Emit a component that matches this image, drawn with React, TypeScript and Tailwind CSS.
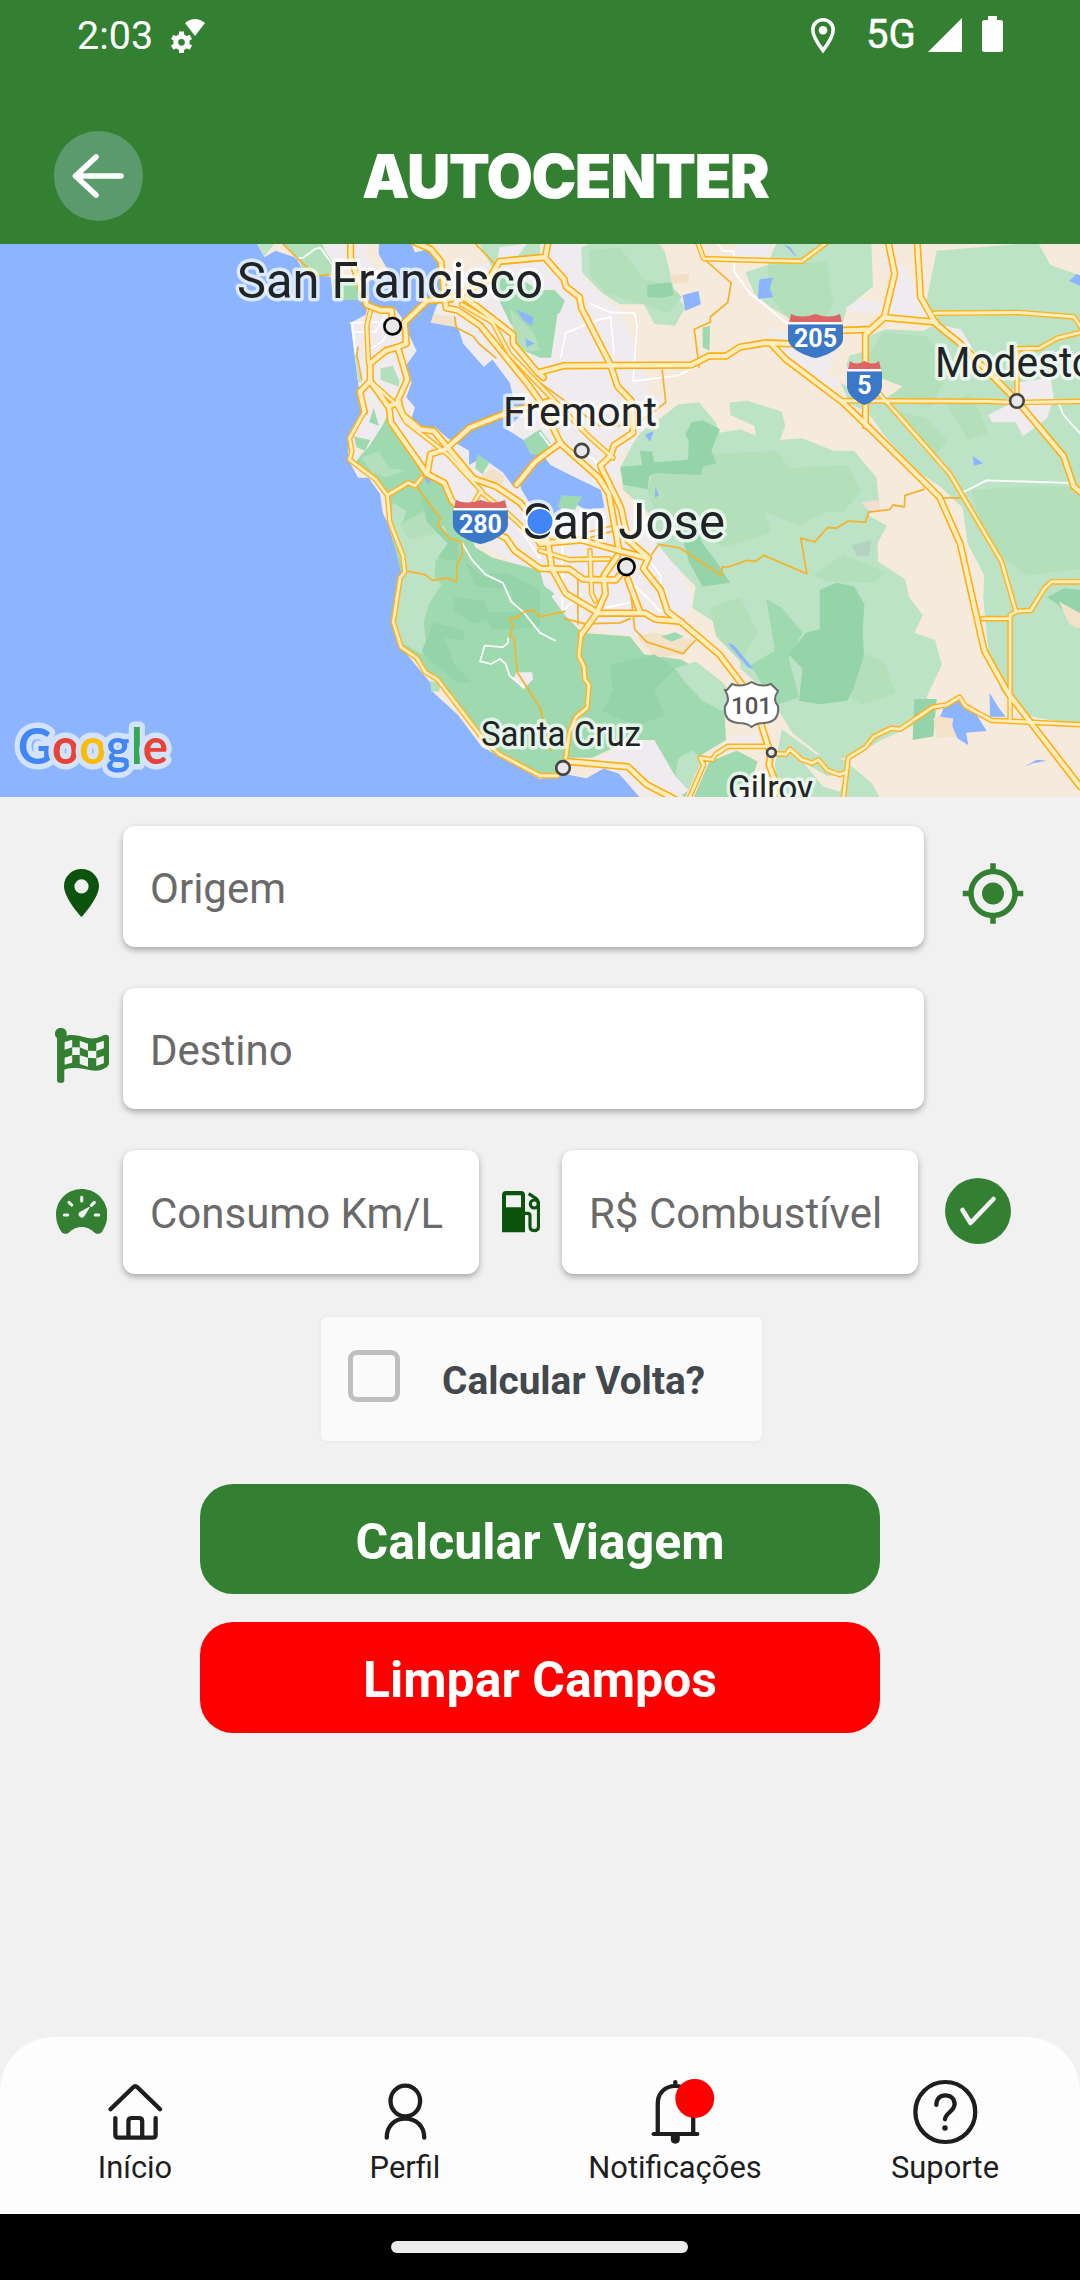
import React from "react";
import { MdMyLocation } from "react-icons/md";

const ROBOTO = "Roboto, 'Noto Sans', sans-serif";

const MAJOR = [
  "1018,0 1018,50 1065,182 1105,197 1137,197 1140,240",
  "1170,235 1240,170 1310,165",
  "1190,0 1250,25 1280,60 1295,190 1330,197 1395,240 1530,400 1568,450 1628,570 1738,665 1768,710 1798,870",
  "1330,150 1390,190 1490,265 1490,290 1560,370 1578,385",
  "1300,165 1360,140 1420,110 1450,60 1583,48",
  "1175,230 1180,290 1155,300 1183,390 1155,450 1170,490 1220,530 1260,535 1375,668 1440,690 1510,735 1588,830 1603,920 1643,990 1738,1045 1873,1045 1903,1062 1978,1068",
  "1155,300 1120,310 1075,345 1075,395 1045,425 1058,480",
  "1075,395 1130,470 1135,510 1240,655 1290,680 1312,730 1380,790 1470,835 1495,870 1568,920 1653,922 1693,950 1788,952 1819,915",
  "1130,465 1160,455",
  "1240,655 1250,600 1295,585 1365,525 1470,485 1600,450",
  "1500,685 1555,620 1628,568",
  "1593,0 1583,50 1638,110 1643,130 1683,160 1688,190 1773,350 1793,410 1833,450 1838,540 1783,575 1773,605 1743,632 1768,680 1803,750 1823,840 1883,890 1868,920 1918,980 1938,1040 1978,1070 2088,1160 2163,1255 2208,1350 2238,1440 2233,1470 2253,1520 2248,1570",
  "1568,370 1638,352 2008,350 2058,325 2108,325 2148,300 2223,288 2330,292",
  "2238,290 2283,335 2448,455 2518,520 2728,720 2788,850 2858,1150 2928,1270 3008,1370 3136,1530",
  "2400,255 2528,250 2568,215 2598,95 2578,0",
  "2513,520 2513,265 2568,217 2718,230",
  "2663,0 2673,160 2718,235 2788,290 2953,450 3088,605 3118,690 3140,708",
  "1648,1460 1823,1475 1878,1525 1968,1570",
  "1733,1045 1758,990 1753,940 1793,885",
  "1823,950 1858,1040",
  "1733,1045 1688,1105",
  "1568,850 1688,840 1798,870 1878,890",
];

const MID = [
  "1058,480 1015,555 1022,590 1015,615 1090,670 1125,715 1132,790 1170,885 1175,930 1162,945 1142,1070 1165,1140 1210,1170 1235,1210 1270,1230 1405,1400 1450,1440 1568,1500 1620,1500",
  "1125,715 1185,680 1205,688 1225,665",
  "1075,200 1065,240 1070,345",
  "1370,745 1395,705 1480,770 1568,850",
  "1080,400 1150,460 1180,510 1300,600 1400,705",
  "1340,180 1430,230 1480,320 1560,400 1710,550 1780,610",
  "2713,205 2958,203 3118,215 3140,245",
  "2440,450 2868,452 2948,455 3140,452",
  "2553,430 2758,655 2908,900 2950,1040",
  "3140,957 3053,957 3033,975 2993,1037 2953,1040 2933,1050 2933,1345",
  "2853,1060 2933,1060",
  "2448,1570 2463,1450 2513,1420 2538,1390 2588,1367 2613,1370 2708,1308 2748,1302 2786,1280 2803,1305 2878,1345 3140,1357",
  "2248,1438 2283,1440 2293,1425 2328,1455 2358,1465 2376,1455 2403,1485 2438,1497 2458,1490",
  "1998,1570 2043,1470 2033,1450 2068,1455 2078,1440 2113,1418 2228,1418",
  "1688,1100 1681,1165 1696,1195 1698,1230 1710,1245 1705,1310 1673,1335 1653,1380 1643,1450",
  "2023,0 2043,52 2133,55 2328,60 2410,0",
  "1713,870 1718,990 1728,1010",
  "1568,870 1653,895 1768,893",
  "2953,450 2953,305 3018,303 3070,275 3140,258",
];

const THIN = [
  "2718,722 2788,722",
  "2683,698 2628,715 2626,747 2593,742 2583,755 2523,762 2513,790 2463,787 2428,807 2403,805 2366,845 2325,835 2343,935 2218,883 2193,900 2168,897 2118,915 2098,915 2095,940 1973,862 1913,852 1893,880",
  "2043,52 2123,120 2113,175 2063,215 2063,230 2016,250 2030,355",
  "1923,365 1933,455 1843,520 1740,520 1568,400",
  "1833,1000 1843,1090 1878,1125 1983,1158 2018,1122",
  "1678,940 1678,1075",
  "1210,690 1280,780 1270,795 1305,835 1340,845 1343,880 1328,905 1325,957 1300,947 1255,953 1235,937 1185,928",
  "1640,1040 1568,1055 1545,1035 1520,1042 1495,1060 1480,1058 1490,1080 1480,1110 1493,1115 1502,1210 1568,1310 1600,1430",
  "1320,215 1325,245 1375,270 1390,290 1440,330",
  "1040,300 1036,320 1050,390",
  "810,0 900,85 925,100 955,98",
  "1370,0 1450,80",
  "1640,1060 1700,1075 1800,1072 1830,1060",
  "1700,820 1780,800",
  "1650,850 1780,815",
];

const WHITE = [
  "1018,232 1100,230",
  "1025,257 1090,257 1118,210",
  "1022,232 1033,318",
  "1075,305 1110,285 1130,250",
  "1340,845 1370,895 1410,937 1460,960 1485,1013 1520,1042 1568,1100 1613,1122",
  "1475,1115 1475,1128 1460,1140 1407,1136 1394,1180 1425,1187 1452,1173 1468,1187 1480,1220 1520,1252",
  "860,50 880,50 915,25 930,22 970,75",
  "2078,0 2098,30 2130,32 2133,90 2178,150 2288,235",
  "1713,178 1773,203 1843,205 1850,240 1838,395 1968,380 2020,355",
  "1628,330 1643,260 1733,225 1773,215 1783,320",
  "2793,708 2865,673 3100,680",
  "3073,455 3088,490 3140,545",
  "1633,860 1633,1040 1688,990",
  "1888,900 1918,940 1918,970",
  "1823,950 1888,1010 1918,1040",
  "1758,1030 1833,1015",
  "1380,790 1480,770 1510,810 1568,890",
  "1568,540 1600,580",
  "1690,590 1730,620 1735,650",
];

const LIGHT = "#bce3c6";
const GREEN = "#9fd9b0";
const SOFT = "#b4dfbb";
const DARK = "#95d4a8";
const URBAN = "#efebee";
const SAND = "#f6eadd";
const WATER = "#8cb4ff";

const AREAS: [string, string][] = [
  ["740,0 768,48 800,30 860,50 885,95 960,103 968,168 1045,168 1065,190 1060,225 1018,232 1040,400 1055,475 1015,540 1010,612 1040,665 1070,665 1103,710 1112,765 1125,790 1150,870 1165,930 1150,1000 1137,1075 1165,1140 1215,1200 1250,1240 1255,1264 1330,1330 1400,1420 1450,1445 1568,1510 1640,1495 1703,1508 1753,1480 1798,1495 1865,1570 3136,1570 3136,0", SAND],
  ["1018,232 1080,200 1568,0 1700,0 1690,100 1800,200 1870,340 1880,430 1940,450 1860,560 1800,600 1790,700 1860,800 1960,900 2010,1000 2000,1040 1850,1110 1620,1060 1568,980 1568,925 1480,900 1400,850 1240,660 1150,520 1080,580 1030,560 1055,475 1040,400", URBAN],
  ["1010,612 1040,590 1060,640 1090,665 1110,680 1120,770 1103,710 1070,665 1040,665", URBAN],
  ["1870,700 1900,840 1890,760", SAND],
  ["1810,190 1880,175 1960,230 2040,260 2020,350 1845,350 1850,205", SAND],
  ["740,0 768,45 805,0", LIGHT],
  ["815,0 865,50 885,95 960,100 965,60 940,25 950,0", SOFT],
  ["930,0 950,40 1000,75 1055,168 1045,168 1100,90 1060,40 1065,0", URBAN],
  ["965,110 1045,110 1045,168 968,168", GREEN],
  ["1105,360 1140,352 1160,395 1158,410 1105,392", SOFT],
  ["1085,470 1100,520 1072,510", GREEN],
  ["1040,300 1036,340 1050,400 1040,400 1030,320", LIGHT],
  ["1125,490 1190,580 1240,655 1290,680 1330,745 1380,860 1430,890 1568,925 1580,970 1640,1050 1690,1100 1830,1110 1870,1160 1980,1175 2100,1250 2108,1400 2040,1440 1990,1560 1920,1530 1895,1420 1830,1400 1720,1450 1650,1450 1620,1500 1568,1500 1450,1440 1400,1400 1270,1240 1165,1140 1140,1070 1165,930 1130,800 1120,720 1090,670 1030,625 1050,600 1070,580 1110,520", GREEN],
  ["1028,550 1075,560 1060,590 1035,580", GREEN],
  ["1050,610 1100,590 1130,640 1180,645 1120,665 1080,650", SOFT],
  ["1140,735 1180,760 1165,800 1230,810 1290,800 1308,840 1305,885 1265,895 1262,945 1282,965 1245,1020 1230,1070 1238,1130 1225,1160 1152,1120 1145,1070 1172,930 1135,800", LIGHT],
  ["1170,790 1230,760 1290,820 1220,830 1190,840 1165,808", SOFT],
  ["1215,690 1280,780 1270,800 1330,850 1330,900 1270,890 1300,850 1240,790", DARK],
  ["1320,1000 1410,1010 1418,1060 1380,1075 1315,1040", DARK],
  ["1260,1070 1350,1095 1345,1120 1290,1115 1320,1190 1370,1240 1330,1240 1250,1180 1225,1150", DARK],
  ["1350,900 1400,940 1470,930 1568,980 1568,1080 1500,1090 1430,1090 1400,1040 1500,1040 1480,980 1380,970", DARK],
  ["1500,1210 1545,1210 1548,1230 1520,1258 1490,1230", URBAN],
  ["1250,1235 1280,1240 1275,1264 1252,1264", SOFT],
  ["1385,0 1568,0 1568,60 1460,70 1440,100 1420,60", LIGHT],
  ["1450,20 1530,10 1500,50 1440,90", URBAN],
  ["1460,80 1583,150 1620,200 1600,330 1568,330 1500,300 1520,280 1480,230 1440,150 1420,110", GREEN],
  ["1480,190 1550,260 1568,310 1500,310", SOFT],
  ["1250,205 1310,215 1330,245 1300,245 1252,232", "#f3e2c9"],
  ["1688,20 1740,0 1905,0 1930,30 1960,150 1990,190 1960,240 1900,235 1870,180 1800,180 1750,150 1690,90", LIGHT],
  ["1710,30 1800,20 1830,60 1870,110 1950,130 1980,160 1940,205 1870,180 1760,150 1715,100", SOFT],
  ["1880,125 1950,118 1955,155 1925,162 1880,160", DARK],
  ["1568,140 1610,140 1640,170 1625,205 1568,210", GREEN],
  ["2040,245 2062,240 2060,310 2040,300", GREEN],
  ["1945,98 2000,95 2000,118 1950,122", "#f1dfc6"],
  ["2133,0 2240,0 2230,50 2133,55", URBAN],
  ["2165,90 2230,70 2245,30 2260,0 2530,0 2535,130 2460,190 2440,250 2320,235 2240,190 2190,150", LIGHT],
  ["2230,70 2400,60 2420,180 2400,215 2290,220 2230,150", SOFT],
  ["2560,50 2630,80 2680,170 2710,230 2560,215 2590,100", URBAN],
  ["2455,190 2500,165 2560,180 2550,205 2470,200", URBAN],
  ["2720,30 2970,10 3010,0 3050,70 3140,100 3140,1360 2970,1330 2905,1260 2870,1150 2855,1000 2858,940 2810,850 2795,750 2730,690 2668,650 2578,560 2518,480 2470,460 2440,400 2470,370 2440,330 2520,310 2520,270 2570,250 2680,255 2730,230 2690,170", LIGHT],
  ["2560,260 2690,270 2750,330 2740,400 2700,470 2590,440 2520,330", SOFT],
  ["2610,480 2690,500 2750,560 2720,600 2640,520", SOFT],
  ["2750,460 2820,430 2870,540 2810,560", SOFT],
  ["2440,400 2470,350 2540,380 2620,410 2600,425 2560,450 2520,440", SAND],
  ["2220,240 2440,330 2460,340 2420,420 2380,400 2290,330", URBAN],
  ["2440,300 2470,315 2440,400 2400,370", SAND],
  ["2950,400 3050,385 3060,440 3040,500 2970,550 2950,510 2880,510 2870,490 2930,460", URBAN],
  ["2740,240 2790,250 2840,330 2780,290", URBAN],
  ["2820,700 2980,690 3140,690 3140,920 2980,940 2900,880 2850,800", SOFT],
  ["3040,1000 3090,975 3140,980 3140,1100 3110,1060 3070,1020", DARK],
  ["3075,1012 3136,1045 3136,1090 3105,1075", "#f3e2c9"],
  ["1838,570 1860,540 1890,520 1970,460 2030,455 2078,510 2090,540 2150,530 2195,548 2190,520 2120,490 2118,455 2170,450 2270,480 2280,520 2265,560 2330,555 2420,590 2480,590 2545,665 2553,740 2520,770 2575,800 2548,850 2550,900 2628,950 2640,1000 2680,1050 2655,1100 2715,1120 2735,1190 2690,1280 2720,1310 2650,1360 2560,1400 2470,1450 2400,1455 2300,1380 2230,1270 2150,1200 2145,1115 2010,1030 2020,970 1950,900 1900,840 1880,760 1810,700 1800,640", LIGHT],
  ["1900,640 2040,600 2260,590 2290,640 2220,760 2240,820 2100,860 2000,800 1900,760 1880,700", SOFT],
  ["1858,590 1893,592 1900,622 1998,615 2000,560 1990,545 2008,510 2040,505 2090,530 2065,590 2080,625 2040,635 2035,658 1905,653 1885,660 1880,698 1810,685 1802,635 1865,630", DARK],
  ["2270,640 2460,630 2500,700 2450,760 2400,760 2320,800 2220,760", SOFT],
  ["1970,790 2010,770 2040,850 2080,900 2120,960 2040,970 2000,900", DARK],
  ["2360,940 2450,880 2570,930 2540,960 2400,955", SOFT],
  ["2225,1005 2270,1030 2330,1100 2290,1170 2320,1280 2260,1300 2210,1240 2180,1190 2250,1150", GREEN],
  ["2380,980 2430,960 2480,970 2510,1020 2505,1090 2510,1200 2460,1290 2380,1300 2320,1290 2330,1200 2290,1160 2340,1100 2380,1090", DARK],
  ["2060,1030 2150,1000 2200,1100 2150,1180 2080,1110", SOFT],
  ["2510,1160 2570,1180 2600,1270 2500,1300 2470,1280", SOFT],
  ["2472,855 2530,840 2525,885 2490,885", "#b3d2c0"],
  ["2500,735 2550,728 2560,760 2520,755", "#f0dfd2"],
  ["2655,1285 2720,1285 2710,1390 2650,1400", DARK],
  ["2710,1340 2760,1310 2780,1390 2720,1395", "#f3e2c9"],
  ["1850,1110 1900,1100 1960,1110 2010,1120 1990,1160 1900,1170", "#f3e2c9"],
  ["1770,1190 1900,1160 1960,1200 1900,1260 1930,1330 1850,1360 1750,1320 1780,1260", DARK],
  ["1960,1200 2020,1180 2100,1240 2140,1300 2100,1320 2040,1290 1990,1240", LIGHT],
  ["1830,1400 1900,1400 1960,1500 2000,1540 1960,1570 1860,1550 1790,1490 1700,1480", URBAN],
  ["1970,1450 2010,1430 2040,1450 2000,1540 1960,1500", LIGHT],
  ["2060,1460 2140,1430 2200,1460 2180,1520 2120,1570 2010,1570", GREEN],
  ["2140,1390 2190,1385 2220,1420 2180,1430 2120,1415", URBAN],
  ["2270,1370 2370,1440 2450,1455 2530,1520 2560,1570 2260,1570 2250,1470", LIGHT],
  ["2330,1460 2400,1500 2450,1500 2440,1545 2390,1530", SAND],
  ["1568,960 1610,990 1590,1010 1568,1000", GREEN],
  ["1920,1110 1960,1098 1985,1110 1950,1125", GREEN],
  ["1100,0 1190,0 1205,35 1245,25 1280,60 1300,130 1265,190 1250,232 1330,245 1345,290 1405,355 1430,335 1480,400 1490,440 1545,460 1470,530 1520,560 1568,590 1598,630 1650,655 1745,700 1755,750 1700,755 1640,720 1620,780 1540,740 1515,700 1510,685 1490,690 1460,650 1400,610 1362,630 1362,590 1300,555 1265,525 1220,520 1195,500 1205,468 1180,440 1195,400 1180,350 1210,310 1180,250 1165,215 1145,190 1060,190 1060,168 1045,168 1062,120 1130,90 1100,40", WATER],
  ["1345,290 1370,285 1420,330 1405,355", URBAN],
  ["1520,560 1568,530 1600,570 1590,600 1540,600", GREEN],
  ["1385,600 1422,622 1400,655 1380,640", GREEN],
  ["1400,655 1430,640 1465,660 1460,685 1400,670", "#f3e2c9"],
  ["1630,715 1690,718 1670,755 1620,750", GREEN],
  ["1982,155 2028,143 2035,180 1990,198", WATER],
  ["2205,110 2245,105 2235,135 2245,160 2200,165", WATER],
  ["2275,11 2295,20 2315,50", WATER],
  ["1873,545 1898,535 1887,565", WATER],
  ["1903,690 1913,715 1902,722", WATER],
  ["2112,1128 2130,1133 2190,1203 2170,1195", WATER],
  ["2825,605 2855,625 2828,632", WATER],
  ["2873,1268 2900,1310 2920,1335 2875,1335", WATER],
  ["2742,1305 2780,1285 2830,1320 2865,1375 2805,1380 2812,1415 2780,1395 2765,1360 2768,1340 2730,1335", WATER],
  ["2975,1475 3010,1455 3040,1458 3000,1465", WATER],
  ["3105,115 3125,95 3140,100 3140,130", WATER],
  ["1500,195 1548,215 1545,240 1520,225", WATER],
  ["1525,275 1552,290 1530,300", WATER],
  ["1230,665 1252,668 1245,685", WATER],
  ["1638,1497 1703,1508 1753,1480 1798,1495 1865,1570 1568,1570 1568,1510", WATER],
];

function Lines({ list, color, width }: { list: string[]; color: string; width: number }) {
  return (
    <g fill="none" stroke={color} strokeWidth={width} strokeLinejoin="round" strokeLinecap="round">
      {list.map((p) => (
        <polyline key={p} points={p} />
      ))}
    </g>
  );
}

function Place({ x, y, size, len, children }: { x: number; y: number; size: number; len: number; children: string }) {
  return (
    <text
      x={x}
      y={y}
      fontSize={size}
      textLength={len}
      lengthAdjust="spacingAndGlyphs"
      fill="#202427"
      stroke="#ffffff"
      strokeOpacity="0.7"
      strokeWidth="7"
      strokeLinejoin="round"
      paintOrder="stroke"
    >
      {children}
    </text>
  );
}

function Interstate({ cx, top, w, label }: { cx: number; top: number; w: number; label: string }) {
  const h = w / 2;
  return (
    <g transform={`translate(${cx} ${top})`}>
      <path d={`M${-h} 18 H${h} V25 C${h} 33 ${h * 0.5} 41 0 44 C${-h * 0.5} 41 ${-h} 33 ${-h} 25Z`} fill="#3b78c8" />
      <path d={`M${-h + 3} 0 Q${-h / 2} 5 0 0 Q${h / 2} 5 ${h - 3} 0 L${h - 1} 8.5 H${-h + 1}Z`} fill="#dc6565" />
      <rect x={-h + 1} y="8" width={w - 2} height="2.5" fill="#fff" />
      <rect x={-h} y="10.5" width={w} height="8" fill="#3b78c8" />
      <text x="0" y="33" fontSize="25" fontWeight="700" fill="#fff" textAnchor="middle">
        {label}
      </text>
    </g>
  );
}

function CityDot({ x, y, r, dark }: { x: number; y: number; r: number; dark?: boolean }) {
  return <circle cx={x} cy={y} r={r} fill="#e8e8e8" stroke={dark ? "#000" : "#444"} strokeWidth="2.6" />;
}

function MapView() {
  return (
    <svg className="block h-[553px] w-full shrink-0" viewBox="0 244 1080 553" fontFamily={ROBOTO}>
      <rect x="0" y="244" width="1080" height="553" fill={WATER} />
      <g transform="translate(0 240) scale(0.34439 0.35714)">
        {AREAS.map(([pts, fill]) => (
          <polygon key={pts} points={pts} fill={fill} />
        ))}
        <Lines list={WHITE} color="#ffffff" width={5} />
        <Lines list={THIN} color="#f5b32b" width={5} />
        <Lines list={MID} color="#ffb31a" width={16} />
        <Lines list={MAJOR} color="#ffae0d" width={21} />
        <Lines list={MID} color="#ffedbf" width={8} />
        <Lines list={MAJOR} color="#ffedbf" width={12} />
      </g>
      <CityDot x={392.6} y={326.2} r={8.2} dark />
      <CityDot x={626.4} y={566.8} r={8.2} dark />
      <CityDot x={581.7} y={450.7} r={6.8} />
      <CityDot x={1016.9} y={401} r={6.8} />
      <CityDot x={563} y={767.9} r={6.8} />
      <CityDot x={771.4} y={752.5} r={4.4} />
      <Interstate cx={815.5} top={314} w={55} label="205" />
      <Interstate cx={864.5} top={361} w={35} label="5" />
      <Interstate cx={480.4} top={500} w={55} label="280" />
      <path
        d="M727 690 L732 684 Q742 688 751.5 682 Q761 688 771 684 L778 691 Q772 700 778 706 Q780 722 764 723 Q756 723 751.5 727 Q747 723 739 723 Q723 722 725 706 Q731 700 725 690Z"
        fill="#fff"
        stroke="#6b6b6b"
        strokeWidth="2"
      />
      <text x="751.5" y="713.5" fontSize="24" fontWeight="500" fill="#555" textAnchor="middle">
        101
      </text>
      <Place x={237} y={297.8} size={50} len={306}>San Francisco</Place>
      <Place x={503} y={426} size={41.5} len={154}>Fremont</Place>
      <Place x={523} y={539} size={50} len={202}>San Jose</Place>
      <Place x={935} y={376.6} size={42} len={160}>Modesto</Place>
      <Place x={481} y={745.5} size={35.5} len={160}>Santa Cruz</Place>
      <Place x={728} y={799.5} size={35.5} len={85}>Gilroy</Place>
      <circle cx="540" cy="521.4" r="13.3" fill="#4285f4" stroke="#fff" strokeWidth="1.6" />
      <text
        x="18"
        y="763.5"
        fontSize="50"
        fontWeight="700"
        textLength="150"
        lengthAdjust="spacingAndGlyphs"
        fontFamily="Lato, sans-serif"
        stroke="#d3e2fd"
        strokeWidth="11"
        strokeLinejoin="round"
        paintOrder="stroke"
      >
        <tspan fill="#4285f4">G</tspan>
        <tspan fill="#ea4335">o</tspan>
        <tspan fill="#fbbc05">o</tspan>
        <tspan fill="#4285f4">g</tspan>
        <tspan fill="#34a853">l</tspan>
        <tspan fill="#ea4335">e</tspan>
      </text>
    </svg>
  );
}

function StatusBar() {
  return (
    <div className="flex h-[70px] items-start text-white">
      <span className="ml-[77px] mt-[12px] w-[94px] text-[39.5px] leading-[48px]">2:03</span>
      <svg className="mt-[18px] h-[35px] w-[36px]" viewBox="0 0 36 35" fill="#fff">
        <path d="M14 5 Q24 -3 34 5 L24 18Z" />
        <circle cx="10.5" cy="24.3" r="5.8" fill="none" stroke="#fff" strokeWidth="4.8" />
        <g stroke="#fff" strokeWidth="5">
          <path d="M10.5 13.5V18M10.5 30.5V35M1.2 18.9L5 21.1M16 27.5L19.8 29.7M1.2 29.7L5 27.5M16 21.1L19.8 18.9" />
        </g>
      </svg>
      <div className="ml-auto mr-[77px] flex items-start">
        <svg className="mr-[30px] mt-[17px] h-[37px] w-[26px]" viewBox="0 0 26 37">
          <path d="M13 2.8C7 2.8 2.8 7.4 2.8 13 2.8 20 13 33.5 13 33.5S23.2 20 23.2 13C23.2 7.4 19 2.8 13 2.8Z" fill="none" stroke="#fff" strokeWidth="3.6" />
          <circle cx="13" cy="13.2" r="4.3" fill="#fff" />
        </svg>
        <span className="mt-[11px] w-[62px] text-[40px] leading-[48px] [-webkit-text-stroke:0.5px_white]">5G</span>
        <svg className="mt-[18px] h-[34px] w-[34px]" viewBox="0 0 34 34">
          <path d="M0 34L34 0V34Z" fill="#fff" />
        </svg>
        <svg className="ml-[20px] mt-[16px] h-[36px] w-[21px]" viewBox="0 0 21 36" fill="#fff">
          <rect x="6" width="9" height="8" />
          <rect y="4" width="21" height="32" rx="2.5" />
        </svg>
      </div>
    </div>
  );
}

function Header() {
  return (
    <header className="flex h-[244px] shrink-0 flex-col bg-[#348032]">
      <StatusBar />
      <div className="flex flex-1 items-start">
        <button className="ml-[54px] mt-[61px] flex h-[90px] w-[89px] items-center justify-center rounded-full bg-[#5b9a6c]">
          <svg className="h-[90px] w-[89px]" viewBox="0 0 89 90" fill="none" stroke="#fff" strokeWidth="5.6" strokeLinecap="round" strokeLinejoin="round">
            <path d="M67 45H21.5M42 26L21.5 45L42 64" />
          </svg>
        </button>
        <h1 className="ml-[219px] mt-[70px] whitespace-nowrap text-[60px] font-black leading-[72px] tracking-[-1.5px] text-white [font-family:Inter,sans-serif]">
          AUTOCENTER
        </h1>
      </div>
    </header>
  );
}

const CARD = "flex items-center rounded-[12px] bg-white pl-[27px] pt-[3px] text-[42px] text-[#6a6a6a] shadow-[0_3px_6px_rgba(0,0,0,0.3)]";

function PinIcon() {
  return (
    <svg className="h-[48px] w-[35px]" viewBox="0 0 35 48">
      <path fillRule="evenodd" fill="#0c530e" d="M17.5 0C7.8 0 0 7.5 0 17 0 29.5 17.5 48 17.5 48S35 29.5 35 17C35 7.5 27.2 0 17.5 0ZM17.5 10.3A7.1 7.1 0 1 1 17.5 24.5A7.1 7.1 0 1 1 17.5 10.3Z" />
    </svg>
  );
}

function FlagIcon() {
  return (
    <svg className="h-[55.3px] w-[54px]" viewBox="160 684 157 166" preserveAspectRatio="none">
      <circle cx="177" cy="701" r="17.3" fill="#348032" />
      <path d="M166 701H187V841Q187 849 177 849Q166 849 166 841Z" fill="#348032" />
      <path d="M180 711C220 694 245 718 275 715C290 713 298 705 307 704Q317 704 317 713V790Q317 797 311 801C270 830 245 792 186 809Z" fill="#348032" />
      <g fill="#f2f2f2">
        <path d="M188 726L210 719V742L188 749Z" />
        <path d="M232 722L256 731V752L232 742Z" />
        <path d="M280 730L302 722V745L280 753Z" />
        <path d="M210 742H232V765H210Z" />
        <path d="M256 752L280 753V775L256 773Z" />
        <path d="M188 773L210 766V788L188 794Z" />
        <path d="M232 766L256 773V800L232 792Z" />
        <path d="M280 775L302 767V790L280 798Z" />
      </g>
    </svg>
  );
}

function GaugeIcon() {
  return (
    <svg className="mb-[2px] h-[45px] w-[51.4px]" viewBox="48 177 154 135">
      <path d="M125 177C82 177 48 211 48 254C48 273 54 290 64 305C69 312 78 314 86 308C98 298 108 291 125 291C142 291 152 298 164 308C172 314 181 312 186 305C196 290 202 273 202 254C202 211 168 177 125 177Z" fill="#348032" />
      <g stroke="#f2f2f2" strokeWidth="9.5" strokeLinecap="round">
        <path d="M125 202V213M87 217L95 225M163 217L154 226M73 255H83M166 255H176" />
      </g>
      <path d="M146 231Q150 230 148 235L133 259A9.500 9.500 0 1 1 118 247Z" fill="#f2f2f2" />
    </svg>
  );
}

function FuelIcon() {
  return (
    <svg className="h-[41.3px] w-[38px]" viewBox="1386 182 114 124">
      <path fillRule="evenodd" fill="#0c530e" d="M1398 182H1443Q1455 182 1455 194V306H1386V194Q1386 182 1398 182ZM1398 195V231H1443V195Z" />
      <g fill="none" stroke="#0c530e" strokeWidth="9.5">
        <path d="M1455 249H1463Q1470 249 1470 256V288Q1470 301 1482.500 301Q1495.500 301 1495.500 288V220Q1495.500 212 1490 206L1466 190" />
        <circle cx="1483" cy="221" r="12" />
      </g>
    </svg>
  );
}

function TripForm() {
  return (
    <main className="flex flex-1 flex-col">
      <div className="mt-[29px] flex h-[121px] items-center pl-[64px]">
        <span className="mt-[13px]"><PinIcon /></span>
        <div className={`${CARD} ml-[24px] h-[121px] w-[801px]`}>Origem</div>
        <MdMyLocation className="ml-[36px] mt-[14px] h-[67px] w-[66px] shrink-0 text-[#348032]" />
      </div>
      <div className="mt-[41px] flex h-[121px] items-center pl-[55px]">
        <span className="mt-[14px]"><FlagIcon /></span>
        <div className={`${CARD} ml-[14px] h-[121px] w-[801px]`}>Destino</div>
      </div>
      <div className="mt-[41px] flex h-[124px] items-center pl-[56px]">
        <GaugeIcon />
        <div className={`${CARD} ml-[15.6px] h-[124px] w-[356px]`}>Consumo Km/L</div>
        <span className="ml-[23px]"><FuelIcon /></span>
        <div className={`${CARD} ml-[22px] h-[124px] w-[356px] whitespace-nowrap`}>R$ Combustível</div>
        <svg className="mb-[2px] ml-[27px] h-[66px] w-[66px]" viewBox="0 0 66 66">
          <circle cx="33" cy="33" r="33" fill="#348032" />
          <path d="M17.500 32L25.500 45L48.500 21" fill="none" stroke="#f2f2f2" strokeWidth="4.600" strokeLinecap="round" strokeLinejoin="round" />
        </svg>
      </div>
      <label className="ml-[319px] mt-[41px] flex h-[128px] w-[445px] items-center rounded-[8px] border-[2.75px] border-[#ededed] bg-[#fafafa] pl-[27px]">
        <span className="mb-[6px] h-[52px] w-[52px] rounded-[9px] border-[5px] border-[#bfbfbf]" />
        <span className="ml-[42px] mt-[4px] whitespace-nowrap text-[38.8px] font-bold text-[#43484d]">Calcular Volta?</span>
      </label>
      <button className="mx-auto mt-[41px] h-[110px] w-[680px] rounded-[33px] bg-[#348032] pt-[6px] text-[50px] font-bold text-white">
        Calcular Viagem
      </button>
      <button className="mx-auto mt-[28px] h-[111px] w-[680px] rounded-[33px] bg-[#ff0000] pt-[6px] text-[50px] font-bold text-white">
        Limpar Campos
      </button>
    </main>
  );
}

function NavItem({ label, origin, children }: { label: string; origin: string; children: React.ReactNode }) {
  return (
    <a className="flex w-[270px] flex-col items-center pt-[38px] text-[30.9px] leading-[36px] text-[#1e1e1e]">
      <svg className="h-[70px] w-[82.64px]" viewBox={origin} preserveAspectRatio="none" fill="none" stroke="#1e1e1e" strokeWidth="12.500" strokeLinecap="round" strokeLinejoin="round">
        {children}
      </svg>
      <span className="mt-[5px]">{label}</span>
    </a>
  );
}

function BottomNav() {
  return (
    <nav className="flex h-[177px] shrink-0 rounded-t-[54px] bg-[#fdfdfd]">
      <NavItem label="Início" origin="272 165 240 210">
        <path d="M320 268L386 202Q392 196 398 202L464 268" />
        <path d="M334 294V344Q334 353 343 353H442Q451 353 451 344V294" />
        <path d="M372 350V304Q372 294 382 294H402Q412 294 412 304V350" />
      </NavItem>
      <NavItem label="Perfil" origin="1056 165 240 210">
        <ellipse cx="1176" cy="243" rx="43" ry="46" />
        <path d="M1122 353C1122 318 1145 296 1176 296C1207 296 1231 318 1231 353" />
      </NavItem>
      <NavItem label="Notificações" origin="272 165 240 210">
        <path d="M329 342H456M341 340V250C341 220 362 198 392 198C422 198 444 220 444 250V340M392 186V196" />
        <path d="M379 346H405V358Q405 371 392 371Q379 371 379 358Z" fill="#1e1e1e" stroke="none" />
        <ellipse cx="448.500" cy="235.500" rx="56.500" ry="58.500" fill="#ff0000" stroke="none" />
      </NavItem>
      <NavItem label="Suporte" origin="1056 165 240 210">
        <ellipse cx="1176" cy="276" rx="87" ry="90" />
        <path d="M1150 255C1150 236 1160 226 1176 226C1193 226 1203 238 1203 252C1203 274 1175 280 1175 298" />
        <circle cx="1175" cy="324" r="8" fill="#1e1e1e" stroke="none" />
      </NavItem>
    </nav>
  );
}

export default function App() {
  return (
    <div className="flex h-[2280px] w-[1080px] flex-col overflow-hidden bg-[#f1f1f1] [font-family:Roboto,'Noto_Sans',sans-serif]">
      <Header />
      <MapView />
      <TripForm />
      <BottomNav />
      <div className="flex h-[66px] shrink-0 bg-black pl-[391px] pt-[27px]">
        <div className="h-[12px] w-[297px] rounded-full bg-[#ebebeb]" />
      </div>
    </div>
  );
}
